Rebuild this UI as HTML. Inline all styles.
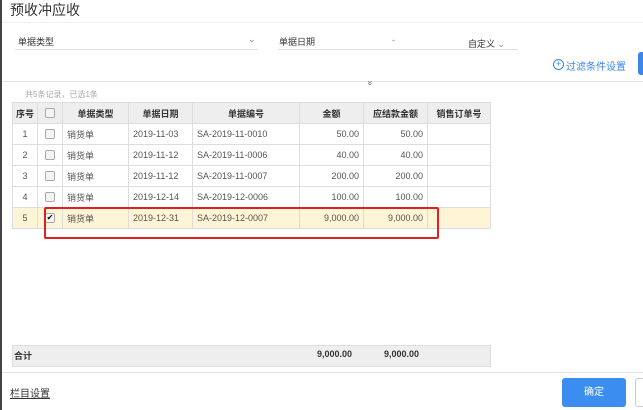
<!DOCTYPE html>
<html><head><meta charset="utf-8"><style>
body{margin:0;width:643px;height:410px;overflow:hidden;background:#fff;font-family:"Liberation Sans","Noto Sans CJK SC",sans-serif;position:relative;color:#333}
.a{position:absolute}
.t{font-size:9px;white-space:nowrap}
table{border-collapse:collapse;position:absolute;left:12px;top:102px;font-size:9px}
td{border:1px solid #ddd;height:20px;padding:0 4px;white-space:nowrap;color:#555}
thead td{background:#eee;font-weight:bold;color:#333;text-align:center}
.r{text-align:right}.c{text-align:center}
.cb{display:inline-block;width:8px;height:8px;border:1px solid #aaa;border-radius:2px;background:#f4f4f4;vertical-align:middle}
.sel td{background:#fdf5d5}
</style></head><body>
<div class="a" style="left:0;top:0;width:2px;height:410px;background:#444"></div>
<div class="a" style="left:10px;top:0;font-size:14px;color:#333">预收冲应收</div>
<div class="a" style="left:2px;top:22px;width:641px;height:1px;background:#f0f0f0"></div>
<div class="a t" style="left:18px;top:35px;color:#333">单据类型</div>
<div class="a t" style="left:248px;top:34px;color:#888">⌄</div>
<div class="a" style="left:15px;top:49px;width:243px;height:1px;background:#ddd"></div>
<div class="a t" style="left:279px;top:35px;color:#333">单据日期</div>
<div class="a t" style="left:392px;top:35px;color:#888">-</div>
<div class="a t" style="left:468px;top:37px;color:#333">自定义 <span style="color:#888">⌄</span></div>
<div class="a" style="left:278px;top:49px;width:240px;height:1px;background:#ddd"></div>
<div class="a" style="left:553px;top:59px;width:9px;height:9px;border:1px solid #3b86e8;border-radius:50%;color:#3b86e8;font-size:9px;line-height:9px;text-align:center">+</div>
<div class="a t" style="left:566px;top:58px;color:#3b86e8;font-size:10px">过滤条件设置</div>
<div class="a" style="left:638px;top:52px;width:10px;height:23px;background:#3b86e8;border-radius:3px"></div>
<div class="a" style="left:2px;top:81px;width:641px;height:1px;background:#e4e4e4"></div>
<div class="a t" style="left:368px;top:78px;color:#666;transform:rotate(90deg)">»</div>
<div class="a t" style="left:25px;top:89px;color:#aaa;font-size:8px">共5条记录，已选1条</div>
<table>
<thead><tr><td style="width:16px;padding:0 3px">序号</td><td style="width:16px" class="c"><span class="cb"></span></td><td style="width:57px">单据类型</td><td style="width:55px">单据日期</td><td style="width:98px">单据编号</td><td style="width:55px">金额</td><td style="width:55px">应结款金额</td><td style="width:54px">销售订单号</td></tr></thead>
<tr><td class="c">1</td><td class="c"><span class="cb"></span></td><td>销货单</td><td>2019-11-03</td><td>SA-2019-11-0010</td><td class="r">50.00</td><td class="r">50.00</td><td></td></tr>
<tr><td class="c">2</td><td class="c"><span class="cb"></span></td><td>销货单</td><td>2019-11-12</td><td>SA-2019-11-0006</td><td class="r">40.00</td><td class="r">40.00</td><td></td></tr>
<tr><td class="c">3</td><td class="c"><span class="cb"></span></td><td>销货单</td><td>2019-11-12</td><td>SA-2019-11-0007</td><td class="r">200.00</td><td class="r">200.00</td><td></td></tr>
<tr><td class="c">4</td><td class="c"><span class="cb"></span></td><td>销货单</td><td>2019-12-14</td><td>SA-2019-12-0006</td><td class="r">100.00</td><td class="r">100.00</td><td></td></tr>
<tr class="sel"><td class="c">5</td><td class="c"><span class="cb" style="font-size:8px;line-height:8px;color:#000">✔</span></td><td>销货单</td><td>2019-12-31</td><td>SA-2019-12-0007</td><td class="r">9,000.00</td><td class="r">9,000.00</td><td></td></tr>
</table>
<div class="a" style="left:44px;top:207px;width:391px;height:28px;border:2px solid #e02020;border-radius:2px"></div>
<div class="a" style="left:12px;top:345px;width:477px;height:20px;background:#eee;border:1px solid #ddd"></div>
<div class="a t" style="left:14px;top:349px;font-weight:bold">合计</div>
<div class="a t" style="left:317px;top:349px;font-weight:bold">9,000.00</div>
<div class="a t" style="left:384px;top:349px;font-weight:bold">9,000.00</div>
<div class="a" style="left:2px;top:372px;width:641px;height:1px;background:#e4e4e4"></div>
<div class="a t" style="left:10px;top:385px;text-decoration:underline;font-size:10px">栏目设置</div>
<div class="a" style="left:562px;top:378px;width:64px;height:29px;background:#3b8ef0;border-radius:3px;color:#fff;font-size:10px;line-height:29px;text-align:center">确定</div>
<div class="a" style="left:635px;top:378px;width:10px;height:27px;border:1px solid #ccc;border-radius:3px"></div>
</body></html>
